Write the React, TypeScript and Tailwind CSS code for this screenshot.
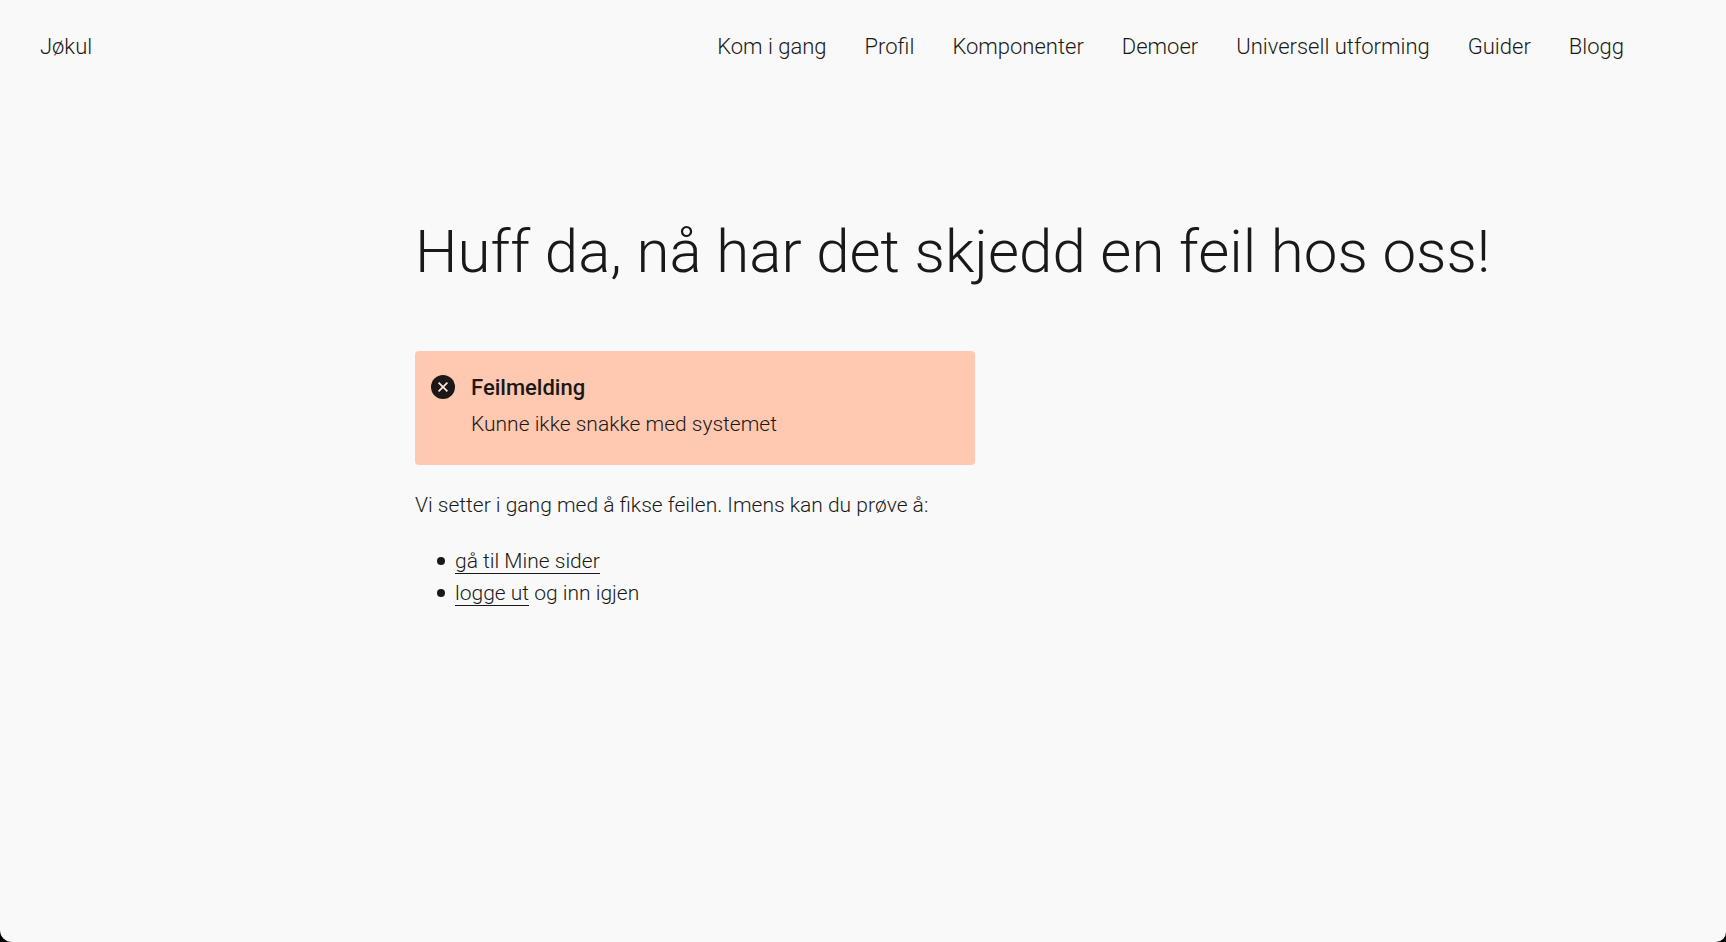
const navItems = [
  'Kom i gang',
  'Profil',
  'Komponenter',
  'Demoer',
  'Universell utforming',
  'Guider',
  'Blogg',
];

function ErrorIcon() {
  return (
    <svg viewBox="0 0 24 24" className="mt-[3px] size-6 shrink-0" aria-hidden="true">
      <circle cx="12" cy="12" r="12" fill="#1b1917" />
      <path d="M7.6 7.6l8.8 8.8M16.4 7.6l-8.8 8.8" stroke="#ffe6da" strokeWidth="1.7" fill="none" />
    </svg>
  );
}

function Header() {
  return (
    <header className="flex items-center justify-between pt-[31px] pr-[102px] pl-10 text-[22px] leading-8">
      <a href="#">Jøkul</a>
      <nav aria-label="Hovedmeny">
        <ul className="flex gap-[38px]">
          {navItems.map((item) => (
            <li key={item}>
              <a href="#">{item}</a>
            </li>
          ))}
        </ul>
      </nav>
    </header>
  );
}

function ErrorMessage() {
  return (
    <div role="alert" className="flex max-w-[560px] gap-4 rounded-[4px] bg-[#ffc8b0] px-4 pt-[21px] pb-[25px]">
      <ErrorIcon />
      <div className="flex flex-col gap-1">
        <p className="text-[22px] font-medium">Feilmelding</p>
        <p>Kunne ikke snakke med systemet</p>
      </div>
    </div>
  );
}

const bulletClass =
  "before:mr-[10px] before:mb-[2px] before:-ml-[18px] before:inline-block before:size-2 before:rounded-full before:bg-[#1b1917] before:align-middle before:content-['']";

export default function App() {
  return (
    <div className="bg-black">
      <div className="min-h-screen rounded-br-[10px] rounded-bl-xl bg-[#f9f9f9] font-['Roboto',sans-serif] font-light text-[#1b1917]">
        <Header />
        <main className="pt-[153px] pr-10 pl-[415px] text-[21px] leading-8">
          <h1 className="text-[60px] leading-[72px]">
            Huff da, nå har det skjedd en feil hos oss!
          </h1>
          <div className="mt-[63px]">
            <ErrorMessage />
          </div>
          <p className="mt-6">Vi setter i gang med å fikse feilen. Imens kan du prøve å:</p>
          <ul className="mt-6 pl-10">
            <li className={bulletClass}>
              <a href="#" className="border-b border-[#1b1917]">gå til Mine sider</a>
            </li>
            <li className={bulletClass}>
              <a href="#" className="border-b border-[#1b1917]">logge ut</a> og inn igjen
            </li>
          </ul>
        </main>
      </div>
    </div>
  );
}
